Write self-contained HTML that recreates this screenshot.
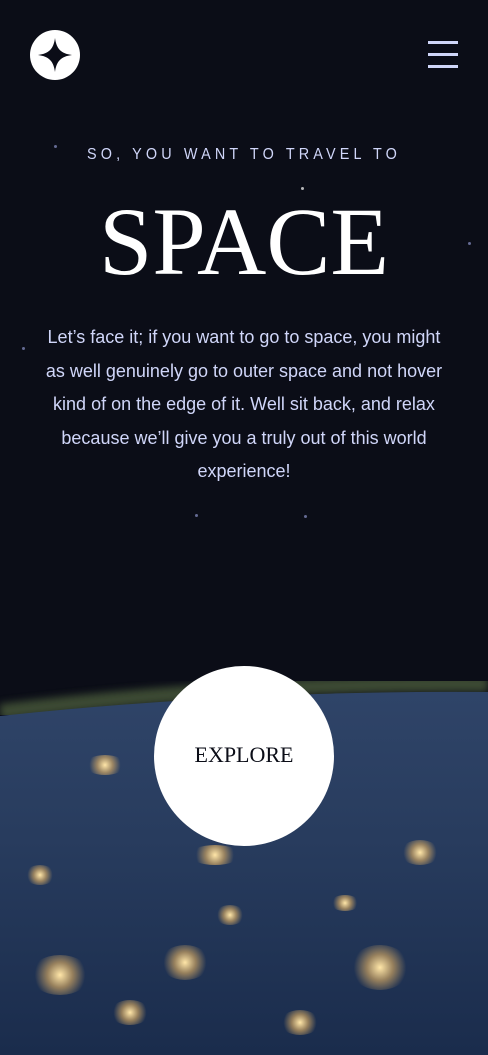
<!DOCTYPE html>
<html><head><meta charset="utf-8"><style>
html,body{margin:0;padding:0;overflow:hidden;width:488px;height:1055px}
body{background:#0b0d17;position:relative;font-family:"Liberation Sans",sans-serif}
.wrap{position:absolute;left:0;top:0;width:488px;height:1055px;overflow:hidden}
.light{position:absolute;border-radius:50%;background:radial-gradient(circle,#ffe6a8 0%,rgba(230,180,100,.6) 35%,rgba(200,150,80,0) 70%)}
.star{position:absolute;width:3px;height:3px;border-radius:50%;background:#8a93c9;opacity:.7}
.sub{position:absolute;top:146px;left:0;width:488px;text-align:center;color:#d0d6f9;font-size:16px;letter-spacing:4.6px;transform:scaleX(.9)}
.h1{position:absolute;top:187px;left:0;width:488px;text-align:center;color:#fff;font-family:"Liberation Serif",serif;font-size:96px;line-height:110px}
.p{position:absolute;top:321px;left:0;width:488px;text-align:center;color:#d0d6f9;font-size:18px;line-height:33.6px;white-space:nowrap}
.btn{position:absolute;left:154px;top:666px;width:180px;height:180px;border-radius:50%;background:#fff;text-align:center;line-height:178px;font-family:"Liberation Serif",serif;font-size:22px;color:#0b0d17}
</style></head><body><div class="wrap">
<svg style="position:absolute;left:0;top:660px" width="488" height="395" viewBox="0 0 488 395">
<defs>
<linearGradient id="g" x1="0" y1="0" x2="0" y2="1"><stop offset="0" stop-color="#2f4468"/><stop offset=".4" stop-color="#283c5e"/><stop offset="1" stop-color="#1a2c4c"/></linearGradient>
<filter id="b"><feGaussianBlur stdDeviation="4"/></filter>
</defs>
<path d="M0 52 Q244 22 488 24" stroke="#4a5a3a" stroke-width="16" fill="none" filter="url(#b)" opacity=".8"/>
<path d="M0 56 Q244 30 488 32 L488 395 L0 395Z" fill="url(#g)"/>
</svg>
<div class="light" style="left:30px;top:955px;width:60px;height:40px"></div>
<div class="light" style="left:160px;top:945px;width:50px;height:35px"></div>
<div class="light" style="left:350px;top:945px;width:60px;height:45px"></div>
<div class="light" style="left:190px;top:845px;width:50px;height:20px"></div>
<div class="light" style="left:400px;top:840px;width:40px;height:25px"></div>
<div class="light" style="left:85px;top:755px;width:40px;height:20px"></div>
<div class="light" style="left:25px;top:865px;width:30px;height:20px"></div>
<div class="light" style="left:215px;top:905px;width:30px;height:20px"></div>
<div class="light" style="left:330px;top:895px;width:30px;height:16px"></div>
<div class="light" style="left:110px;top:1000px;width:40px;height:25px"></div>
<div class="light" style="left:280px;top:1010px;width:40px;height:25px"></div>
<div class="star" style="left:301px;top:187px;background:#fff"></div>
<div class="star" style="left:22px;top:347px"></div>
<div class="star" style="left:468px;top:242px"></div>
<div class="star" style="left:54px;top:145px"></div>
<div class="star" style="left:195px;top:514px"></div>
<div class="star" style="left:304px;top:515px"></div>
<svg style="position:absolute;left:30px;top:30px" width="50" height="50" viewBox="0 0 50 50"><circle cx="25" cy="25" r="25" fill="#fff"/><path d="M25 8 C26.5 19 31 23.5 42 25 C31 26.5 26.5 31 25 42 C23.5 31 19 26.5 8 25 C19 23.5 23.5 19 25 8Z" fill="#0b0d17"/></svg>
<svg style="position:absolute;left:428px;top:41px" width="30" height="28"><rect y="0" width="30" height="3" fill="#d0d6f9"/><rect y="12" width="30" height="3" fill="#d0d6f9"/><rect y="24" width="30" height="3" fill="#d0d6f9"/></svg>
<div class="sub">SO, YOU WANT TO TRAVEL TO</div>
<div class="h1">SPACE</div>
<div class="p">Let’s face it; if you want to go to space, you might<br>as well genuinely go to outer space and not hover<br>kind of on the edge of it. Well sit back, and relax<br>because we’ll give you a truly out of this world<br>experience!</div>
<div class="btn">EXPLORE</div>
</div></body></html>
